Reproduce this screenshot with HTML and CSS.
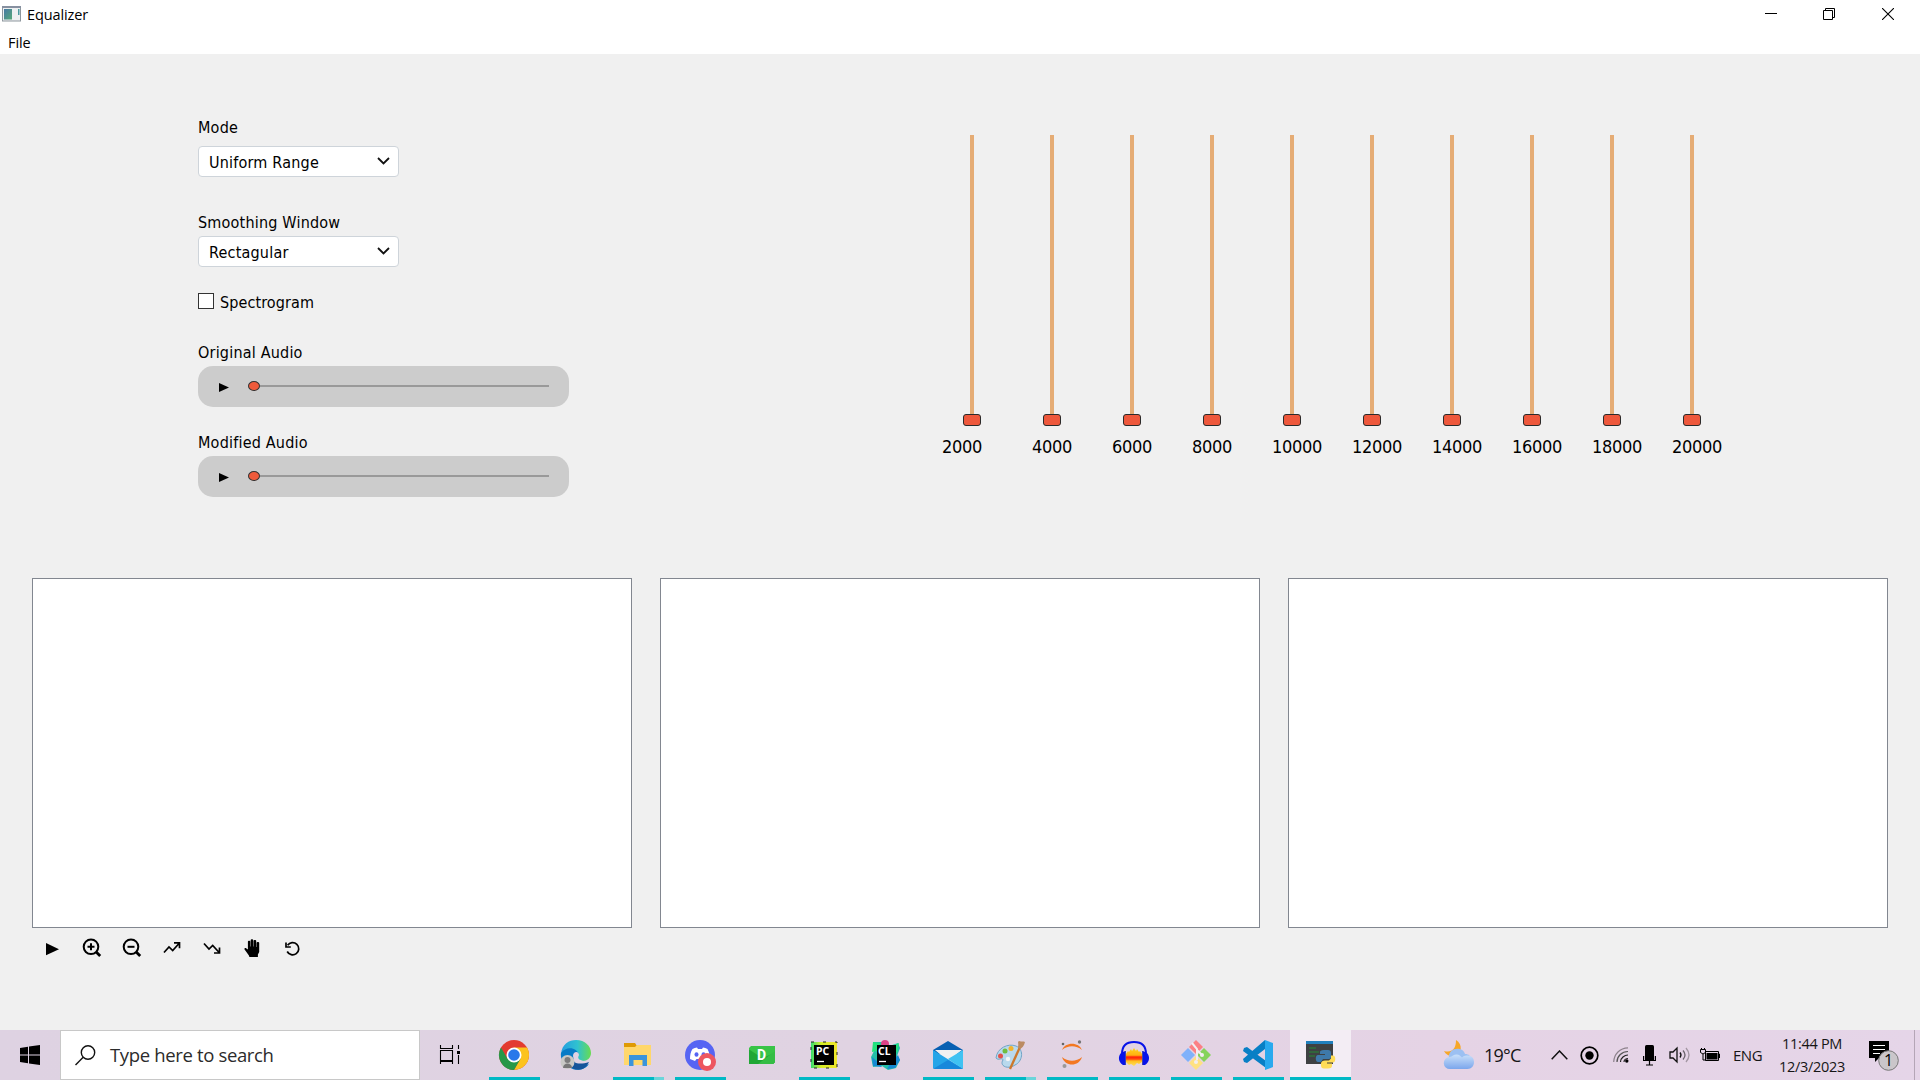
FILE: index.html
```html
<!DOCTYPE html>
<html lang="en">
<head>
<meta charset="utf-8">
<title>Equalizer</title>
<link rel="stylesheet" href="styles.css">
</head>
<body>
<header class="titlebar">
  <svg class="app-icon" width="19" height="16" viewBox="0 0 19 16"><rect x=".5" y=".5" width="18" height="14.500" fill="#edf0f1" stroke="#8e979e"/><path d="M0 1h19" stroke="#8790a0" stroke-width="2"/><rect x="2" y="3" width="8" height="10.500" fill="url(#ag)"/><rect x="16" y="3" width="1.500" height="6" fill="#4b9aa0"/><defs><linearGradient id="ag" x2="1" y2="1"><stop stop-color="#4678a5"/><stop offset="1" stop-color="#55a978"/></linearGradient></defs></svg>
  <span class="title">Equalizer</span>
  <div class="window-buttons">
    <svg width="12" height="12" viewBox="0 0 12 12"><path d="M0 5.500h12" stroke="#000"/></svg>
    <svg width="12" height="12" viewBox="0 0 12 12" fill="none" stroke="#000"><path d="M.5 2.500h9v9h-9zM2.500 2V.5h9v9H10"/></svg>
    <svg class="close" width="12" height="12" viewBox="0 0 12 12" stroke="#000" stroke-width="1.100"><path d="M0 0l12 12M12 0L0 12"/></svg>
  </div>
</header>
<nav class="menubar"><span class="menu">File</span></nav>
<main class="window">
  <section class="top">
    <div class="controls">
      <div class="label mode-label"><span>Mode</span></div>
      <div class="select"><span>Uniform Range</span><svg width="13" height="8" viewBox="0 0 13 8"><path d="M1 1l5.500 5.500L12 1" fill="none" stroke="#111" stroke-width="1.800"/></svg></div>
      <div class="label smooth-label"><span>Smoothing Window</span></div>
      <div class="select"><span>Rectagular</span><svg width="13" height="8" viewBox="0 0 13 8"><path d="M1 1l5.500 5.500L12 1" fill="none" stroke="#111" stroke-width="1.800"/></svg></div>
      <div class="check"><i class="box"></i><span>Spectrogram</span></div>
      <div class="label audio-label"><span>Original Audio</span></div>
      <div class="player"><svg width="10" height="9" viewBox="0 0 10 9"><path d="M0 0l10 4.500L0 9z"/></svg><i class="knob"></i><i class="track"></i></div>
      <div class="label audio2-label"><span>Modified Audio</span></div>
      <div class="player"><svg width="10" height="9" viewBox="0 0 10 9"><path d="M0 0l10 4.500L0 9z"/></svg><i class="knob"></i><i class="track"></i></div>
    </div>
    <div class="equalizer">
      <div class="band first"><i class="rail"></i><i class="handle"></i><span>2000</span></div>
      <div class="band"><i class="rail"></i><i class="handle"></i><span>4000</span></div>
      <div class="band"><i class="rail"></i><i class="handle"></i><span>6000</span></div>
      <div class="band"><i class="rail"></i><i class="handle"></i><span>8000</span></div>
      <div class="band wide"><i class="rail"></i><i class="handle"></i><span>10000</span></div>
      <div class="band wide"><i class="rail"></i><i class="handle"></i><span>12000</span></div>
      <div class="band wide"><i class="rail"></i><i class="handle"></i><span>14000</span></div>
      <div class="band wide"><i class="rail"></i><i class="handle"></i><span>16000</span></div>
      <div class="band wide"><i class="rail"></i><i class="handle"></i><span>18000</span></div>
      <div class="band wide"><i class="rail"></i><i class="handle"></i><span>20000</span></div>
    </div>
  </section>
  <section class="plots"><div class="plot"></div><div class="plot"></div><div class="plot"></div></section>
  <div class="toolbar">
    <svg viewBox="0 0 20 20"><path d="M4 5l13 6.200L4 17.200z"/></svg>
    <svg viewBox="0 0 20 20" class="line"><circle cx="9" cy="8.800" r="7.300"/><path d="M9 5.300v7M5.500 8.800h7" /><path d="M14.200 14l4 4" stroke-width="2.800"/></svg>
    <svg viewBox="0 0 20 20" class="line"><circle cx="9" cy="8.800" r="7.300"/><path d="M5.500 8.800h7"/><path d="M14.200 14l4 4" stroke-width="2.800"/></svg>
    <svg viewBox="0 0 20 20" class="thin"><path d="M2 14.500l5-5.500 3.700 3.500L17 5.500M12 4.800h5.500v5.500"/></svg>
    <svg viewBox="0 0 20 20" class="thin"><path d="M2 5.500l5 5.500 3.700-3.500 6 6.500M12 15h5.500V9.500"/></svg>
    <svg viewBox="0 0 20 20"><path transform="translate(.9 .6)" d="M6 17L1.700 11c-.8-1.300 1-2 1.800-1.100L5 11V3.200c0-1.400 2.400-1.400 2.400 0V8h.4V1.600c0-1.400 2.500-1.400 2.500 0V8h.4V2.400c0-1.400 2.600-1.400 2.600 0V8.500h.4V4.400c0-1.300 2.600-1.300 2.600 0v9L15 16v2.500H6.500z"/></svg>
    <svg viewBox="0 0 20 20" class="thin"><path d="M5.600 7.300A6.100 6.100 0 1 1 5.200 13.500M4 4.500V9h4.800"/></svg>
  </div>
</main>
<footer class="taskbar">
  <div class="start"><svg width="20" height="20" viewBox="0 0 20 20"><path d="M0 3l8-1.200V9.400H0zM9 1.600L20 0v9.400H9zM0 10.500h8v7.700L0 17zM9 10.500h11V20L9 18.400z"/></svg></div>
  <div class="search"><svg width="21" height="21" viewBox="0 0 21 21" fill="none" stroke="#111" stroke-width="1.400"><circle cx="13" cy="7.500" r="6.700"/><path d="M8.200 12.300L.5 20"/></svg><span>Type here to search</span></div>
  <div class="apps">
    <div class="app plain"><svg viewBox="0 0 32 32" fill="none" stroke="#000" stroke-width="1.100"><path d="M7.500 6v3.500h12V6M7.500 11.500h12v10h-12zM7.500 25v-2.500h12V25M25.500 6v4M25.500 16v9"/><path d="M24 12h3v3h-3z" fill="#000" stroke="none"/></svg></div>
    <div class="app run"><svg viewBox="0 0 32 32"><circle cx="16" cy="16" r="15" fill="#e33b30"/><path d="M16 31A15 15 0 0 0 31 16c0-3-.8-5.500-2-7.500H16l6.500 11z" fill="#fcc31e"/><path d="M3 8.500a15 15 0 0 0 13 22.500l6.500-11.300L16 16 9.500 19.700z" fill="#279847"/><circle cx="16" cy="16" r="7.500" fill="#fff"/><circle cx="16" cy="16" r="5.800" fill="#2878ea"/></svg></div>
    <div class="app"><svg viewBox="0 0 32 32"><defs><linearGradient id="ed"><stop stop-color="#249de0"/><stop offset=".55" stop-color="#30c2d0"/><stop offset="1" stop-color="#68dc50"/></linearGradient></defs><path d="M1 15C2 5 9 1 16 1c9 0 15 6 15 13 0 5-4 8-8 8-4 0-6-1-5-4 2-5-6-9-17-3z" fill="url(#ed)"/><path d="M1 14c5-7 16-6 18 2-5-1-7 3-4 8 3 4 8 4 14 1-4 6-13 8-20 3-5-3-9-8-8-14z" fill="#087bc6"/><path d="M12 18c0 7 8 8 17 5-3 7-9 9-15 7-5-3-6-8-2-12z" fill="#14549a"/><path d="M13 17c0-5 6-5 6-1-2 3 0 6 5 5-4 2-10 2-11-4z" fill="#e0d3e3"/><circle cx="7.500" cy="23" r="7" fill="#c9c9c6"/><circle cx="7.500" cy="21" r="3" fill="#7c7c7c"/><path d="M3 29c0-6 9-6 9 0z" fill="#777"/></svg></div>
    <div class="app run multi"><svg viewBox="0 0 32 32"><path d="M2 4h11l2 3v5H2z" fill="#df9a04"/><path d="M2 8h11l2-2h14v20H2z" fill="#ffd76b"/><path d="M7 27V16h18v11h-4.500v-6h-9v6z" fill="#3a94dc"/></svg></div>
    <div class="app run"><svg viewBox="0 0 32 32"><circle cx="16" cy="16" r="15" fill="#5664f3"/><path d="M8.500 10c1.500-.8 3-1.300 4.500-1.500l1 1.500h4l1-1.500c1.500.2 3 .7 4.500 1.500 2 4 3 8 2 11l-4.500 1-1.500-2h-7l-1.500 2L6 20c0-4 .5-7 2.500-10z" fill="#fff"/><ellipse cx="12.500" cy="15.500" rx="2" ry="2.200" fill="#5664f3"/><ellipse cx="19.500" cy="15.500" rx="2" ry="2.200" fill="#5664f3"/><circle cx="23" cy="23" r="9" fill="#ed5660"/><circle cx="23" cy="23" r="4" fill="#fff"/></svg></div>
    <div class="app"><svg viewBox="0 0 32 32"><path d="M5 7h24v16l-2 2H3V9z" fill="#38c447"/><path d="M4 11l12 8 13-5v9l-2 2H3V11z" fill="#20a735"/><path d="M12 25l17-13v11l-2 2z" fill="#35bd45"/><text x="15.500" y="21" class="dtext">D</text></svg></div>
    <div class="app run"><svg viewBox="0 0 32 32"><defs><linearGradient id="pc"><stop stop-color="#36dc70"/><stop offset=".4" stop-color="#d8ed26"/><stop offset="1" stop-color="#efe72c"/></linearGradient></defs><path d="M3 3h26v26H3z" fill="url(#pc)"/><path d="M3 3h26v26H3z" fill="none" stroke="#222" stroke-dasharray="3 9"/><path d="M6 6h20v20H6z"/><text x="8" y="16" class="jb">PC</text><path d="M9 22.500h7" stroke="#fff" stroke-width="1.300"/></svg></div>
    <div class="app"><svg viewBox="0 0 32 32"><path d="M3 3l10 0 6 4 9-3 2 5-3 8 3 4-4 8-8 2-6-4-9 1-2-10 3-6z" fill="#24bfa8"/><path d="M2 18l7 6 3 4-9-1zM28 16l2 5-5 8-8 1 3-5z" fill="#168ad2"/><path d="M3 3l8 1-4 8-5 1zM21 8l8-4-2 10z" fill="#22e27d"/><circle cx="15" cy="5" r="4" fill="#dd4286"/><path d="M7 6h19v20H7z"/><text x="8" y="16" class="jb">CL</text><path d="M9 22.500h7" stroke="#fff" stroke-width="1.300"/></svg></div>
    <div class="app run"><svg viewBox="0 0 32 32"><path d="M1 11L16 2l15 9v4H1z" fill="#075fb2"/><path d="M3 11h27L16 22z" fill="#f1f1f1"/><path d="M1 11l30 18.500H1z" fill="#25a5e8"/><path d="M31 11v19L16 20z" fill="#40c2f2"/><path d="M1 30l15-9 15 9z" fill="#1788db"/></svg></div>
    <div class="app run multi"><svg viewBox="0 0 32 32"><path d="M2 19C3 9 14 4 22 7c9 4 6 16-1 19-7 5-16 1-12-5 0-3-5 1-7-2z" fill="#b9d9ed" stroke="#70a4c6"/><circle cx="6.500" cy="17" r="2.500" fill="#e3524c"/><circle cx="11" cy="12" r="2.500" fill="#71bd3f"/><circle cx="17" cy="9.500" r="2.500" fill="#f3b32c"/><circle cx="14" cy="20" r="2.200" fill="#f4f5f6"/><path d="M16 30L26 8" stroke="#cc782c" stroke-width="2.300"/><path d="M24 8c1-4-1-5 1-6 3 1 4 0 6 1-1 4-3 6-5 7z" fill="#bb8b62"/></svg></div>
    <div class="app run"><svg viewBox="0 0 32 32"><path d="M6 11C9 2.500 23 2.500 26 11 20 6 12 6 6 11zM6 18c3 10 17 10 20 0-6 5-14 5-20 0z" fill="#f37821"/><circle cx="7" cy="5" r="1.300" fill="#666"/><circle cx="23.500" cy="3" r="1.700" fill="#777"/><circle cx="8.500" cy="27" r="2" fill="#999"/></svg></div>
    <div class="app run"><svg viewBox="0 0 32 32"><defs><linearGradient id="au" x2="0" y2="1"><stop stop-color="#ffd420"/><stop offset=".4" stop-color="#ffb010"/><stop offset=".5" stop-color="#ff1d0b"/><stop offset=".62" stop-color="#ff4a0b"/><stop offset=".72" stop-color="#ffc020"/><stop offset="1" stop-color="#ffe060"/></linearGradient></defs><path d="M8 15l2-3 1 1 2-3 1 2 2-3 2 3 1-2 2 3 1-1 2 3v8l-3 2-2-1-3 3-3-2-2 1-3-3z" fill="url(#au)"/><path d="M4 15C4 6 9 3 16 3S28 6 28 15" fill="none" stroke="#0713e8" stroke-width="2"/><path d="M7 12v14H5c-5-3-5-9-2-12zM25 12v14h2c5-3 5-9 2-12z" fill="#0713e8"/><path d="M7.500 12v14M24.500 12v14" stroke="#3e45b0"/></svg></div>
    <div class="app run"><svg viewBox="0 0 32 32"><path d="M16 1l7 7-7 7-7-7z" fill="#fb8084"/><path d="M8 9l7 7-7 7-7-7z" fill="#80b1fa"/><path d="M24 9l7 7-7 7-7-7z" fill="#86d35b"/><path d="M16 17l7 7-7 7-7-7z" fill="#ffe181"/><path d="M12 4l5 6v11M17 11l5 5" stroke="#f2edf0" stroke-width="2" fill="none"/><circle cx="16" cy="23" r="2" fill="#f2edf0"/><circle cx="22" cy="16" r="2" fill="#f2edf0"/></svg></div>
    <div class="app run"><svg viewBox="0 0 32 32"><path d="M2 9l3-1 19 14v7L1 12zM1 20L23 1v9L5 24l-3-1z" fill="#087fc5"/><path d="M23 1l8 3v24l-8 3z" fill="#29a9ee"/></svg></div>
    <div class="app run active"><svg viewBox="0 0 32 32"><path d="M2 2h27v23H2z" fill="#3e4142"/><path d="M2 2h27v3H2z" fill="#2080bd"/><path d="M5 9h7M5 13h10M5 17h6" stroke="#248a35" stroke-width="1.200"/><path d="M20 11h4c2 0 3 1 3 3v4c0 2-2 2-3 2h-5l-2 3h-3c-3 0-3-7 0-7h7v-1h-5v-2c0-1 1-2 4-2z" fill="#3e79aa"/><path d="M24 29.500h-4c-2 0-3-1-3-3v-2c0-2 2-3 4-3h4l2-2v-3h2c3 0 3 7 0 7h-6v1h5v2c0 2-1 3-4 3z" fill="#ffdc57"/></svg></div>
  </div>
  <div class="tray">
    <svg class="weather" width="32" height="32" viewBox="0 0 32 32"><defs><linearGradient id="cl" x2="0" y2="1"><stop stop-color="#c9e0fa"/><stop offset="1" stop-color="#7ba6ec"/></linearGradient></defs><path d="M13 1c7 4 6 14-1 16C7 18 3 16 1 12c8 2 12-2 12-11z" fill="#f7a728"/><path d="M6 20C4 8 20 7 22 15c4 0 6 2 5 6z" fill="#9cc0f2"/><path d="M7 30a6 6 0 0 1-.5-12c3-.5 4-2.500 7-2.500s4 1.500 5.500 3c2-2 4-2 6-2 4.500.5 6 3.500 6 6.500 0 4-2.500 7-6.500 7z" fill="url(#cl)"/></svg>
    <span class="temp">19°C</span>
    <svg class="chev" width="17" height="10" viewBox="0 0 17 10"><path d="M.7 9.200L8.500 1l7.800 8.200" fill="none" stroke="#111" stroke-width="1.500"/></svg>
    <svg class="rec" width="19" height="19" viewBox="0 0 19 19"><circle cx="9.500" cy="9.500" r="8.300" fill="none" stroke="#000" stroke-width="1.700"/><circle cx="9.500" cy="9.500" r="4.200"/></svg>
    <svg class="wifi" width="16" height="16" viewBox="0 0 16 16" fill="none" stroke-width="1.200"><path d="M.7 15C1 7 7 1 15 .8" stroke="#8d828c"/><path d="M4 15C4 9 9 4.600 15 4.500" stroke="#555"/><path d="M7.500 15c0-4 4-7 7.500-7M11 15c0-2 2-3.500 4-3.500" stroke="#222"/><circle cx="13.800" cy="14" r="1.700" fill="#000" stroke="none"/></svg>
    <svg class="mic" width="13" height="21" viewBox="0 0 13 21"><rect x="2" width="9" height="16" rx="1.500"/><path d="M.6 11v4.500h11.800V11M6.500 16v4M3 20h7" fill="none" stroke="#000" stroke-width="1.200"/></svg>
    <svg class="vol" width="21" height="18" viewBox="0 0 21 18" fill="none" stroke="#111" stroke-width="1.300"><path d="M1 6h3l4-4v14l-4-4H1z"/><path d="M11 6.500q2 2.500 0 5"/><path d="M14 4.500q4 4.500 0 9" stroke="#6d656d"/><path d="M17 2q6 7 0 14" stroke="#a397a2"/></svg>
    <svg class="bat" width="20" height="14" viewBox="0 0 20 14"><path d="M5.500 3.500h13v9h-13zM18.500 6h1v4" fill="none" stroke="#000"/><path d="M6.500 5h11v6.500h-11z"/><path d="M.5 1.500h5v3L3 6 .5 4.500zM1.500 0v2M4.500 0v2M3 6v6h3" fill="none" stroke="#000"/></svg>
    <span class="lang">ENG</span>
    <div class="clock"><span class="time">11:44 PM</span><span class="date">12/3/2023</span></div>
    <div class="notice"><svg width="31" height="31" viewBox="0 0 31 31"><path d="M0 1h20v17H10l-4 4v-4H0z"/><path d="M4 5.500h12M4 9.500h12M4 13.500h7" stroke="#fff" stroke-width="1.200"/><circle cx="19.500" cy="20.500" r="9.800" fill="#cac6ca" stroke="#777"/><text x="19.500" y="26" class="count">1</text></svg></div>
    <i class="peek"></i>
  </div>
</footer>
</body>
</html>
```
FILE: styles.css
```css
* { box-sizing: border-box; }
body { margin: 0; width: 1920px; height: 1080px; overflow: hidden; display: flex; flex-direction: column; background: #f0f0f0; color: #000; font-family: "Noto Sans", sans-serif; }
svg { display: block; flex: none; }
i { display: block; flex: none; }
.titlebar { height: 28px; background: #fff; display: flex; align-items: center; padding: 0 26px 0 2px; font-family: "Open Sans", sans-serif; font-size: 14.500px; }
.title { margin: 0 0 0 6px; letter-spacing: -.1px; }
.window-buttons { margin-left: auto; display: flex; gap: 46px; }
.app-icon { margin-top: -1px; }
.close { margin-left: 1px; }
.menubar { height: 26px; background: #fff; padding-left: 8px; font: 14.500px/29px "Open Sans", sans-serif; letter-spacing: -.1px; }
.window { height: 976px; display: flex; flex-direction: column; }
.top { height: 524px; display: flex; justify-content: space-between; padding: 0 188px 0 198px; }
.controls { width: 371px; padding-top: 64px; font: 16px/20px "DejaVu Sans Condensed", "DejaVu Sans", sans-serif; letter-spacing: .2px; }
.controls span { white-space: nowrap; }
.label { height: 20px; }
.mode-label { margin-bottom: 8px; }
.smooth-label { margin: 36px 0 3px; }
.select { width: 201px; height: 31px; background: #fff; border: 1px solid #ced4da; border-radius: 4px; display: flex; align-items: center; justify-content: space-between; padding: 3px 8.500px 0 10px; }
.select svg { margin-top: -5px; }
.check { height: 22px; margin-top: 25px; display: flex; align-items: center; gap: 6px; letter-spacing: .1px; }
.box { width: 16px; height: 16px; border: 1px solid #333; background: #fff; margin-bottom: 4px; }
.audio-label { margin: 29px 0 3px; }
.audio2-label { margin: 26px 0 3px; }
.player { height: 41px; border-radius: 15px; background: #ccc; display: flex; align-items: center; padding: 0 20px 0 21px; }
.player svg { margin-top: 2px; }
.knob { width: 12px; height: 10px; border-radius: 50%; border: 1px solid #333; background: #ee5a3b; margin: 0 0 1px 19px; }
.track { flex: 1; height: 2px; background: #999; margin-bottom: 1px; }
.equalizer { display: flex; padding-top: 81px; }
.band { width: 80px; display: flex; flex-direction: column; align-items: center; }
.rail { width: 4px; height: 279px; background: #e5ac75; }
.handle { width: 18px; height: 12px; border: 1px solid #2b2b2b; border-radius: 3px; background: #ee583c; }
.band span { margin-top: 10px; font: 18px/22px "DejaVu Sans Condensed", "DejaVu Sans", sans-serif; letter-spacing: -.3px; }
.band.first span { margin-left: -20px; }
.band.wide span { margin-left: 10px; }
.plots { display: flex; gap: 28px; padding: 0 32px; }
.plot { width: 600px; height: 350px; background: #fff; border: 1px solid #828790; }
.toolbar { display: flex; gap: 20px; padding: 10px 42px; }
.toolbar svg { width: 20px; height: 20px; }
.line { fill: none; stroke: #000; stroke-width: 2; }
.thin { fill: none; stroke: #000; stroke-width: 1.700; }
.taskbar { height: 50px; display: flex; background: linear-gradient(90deg, #ded2e2, #e0d3e2 45%, #e5d3e5 75%, #e5d5e8); }
.start { width: 60px; display: flex; align-items: center; justify-content: center; }
.search { width: 360px; background: #fff; border: 1px solid #c8c8c8; display: flex; align-items: center; padding-left: 14px; gap: 14px; font: 18.500px/24px "Open Sans", sans-serif; color: #2b2b2b; }
.search span { letter-spacing: -.35px; }
.apps { display: flex; padding-left: 1.500px; }
.app { width: 62px; height: 50px; display: flex; flex-direction: column; align-items: center; padding-top: 9px; }
.app svg { width: 32px; height: 32px; margin-right: 1px; }
.app.plain svg { margin-right: 8px; }
.run::after { content: ""; width: 51px; height: 3px; background: #00b9c5; margin-top: 6px; }
.multi::after { background: linear-gradient(90deg, #00b9c5 41px, #6ad5da 41px); }
.active { width: 61px; background: #f3edf4; }
.app.active svg { margin-left: 1px; }
.active::after { width: 61px; }
.dtext { font: bold 14px Roboto, sans-serif; fill: #fff; text-anchor: middle; }
.jb { font: bold 10.500px "Noto Sans", sans-serif; fill: #fff; }
.tray { margin-left: auto; display: flex; align-items: center; font-family: "Open Sans", sans-serif; color: #161616; }
.weather { margin-top: -1px; }
.temp { width: 37px; margin-left: 9px; font-size: 18px; letter-spacing: -.8px; }
.chev { margin-left: 30px; }
.rec { margin-left: 12px; }
.wifi { margin-left: 14px; }
.mic { margin-left: 14px; }
.vol { margin-left: 13px; }
.bat { margin-left: 10px; }
.lang { width: 28px; margin-left: 13px; font-size: 15px; letter-spacing: -.5px; }
.clock { width: 68px; margin-left: 17px; display: flex; flex-direction: column; align-items: center; font-size: 14.500px; line-height: 23px; white-space: nowrap; letter-spacing: -.3px; padding-bottom: 1px; }
.notice { margin-left: 23px; }
.peek { width: 6px; height: 50px; margin-left: 14px; border-left: 1px solid #b4a6b6; }
.count { font: 16px "Open Sans", sans-serif; text-anchor: middle; }
```
